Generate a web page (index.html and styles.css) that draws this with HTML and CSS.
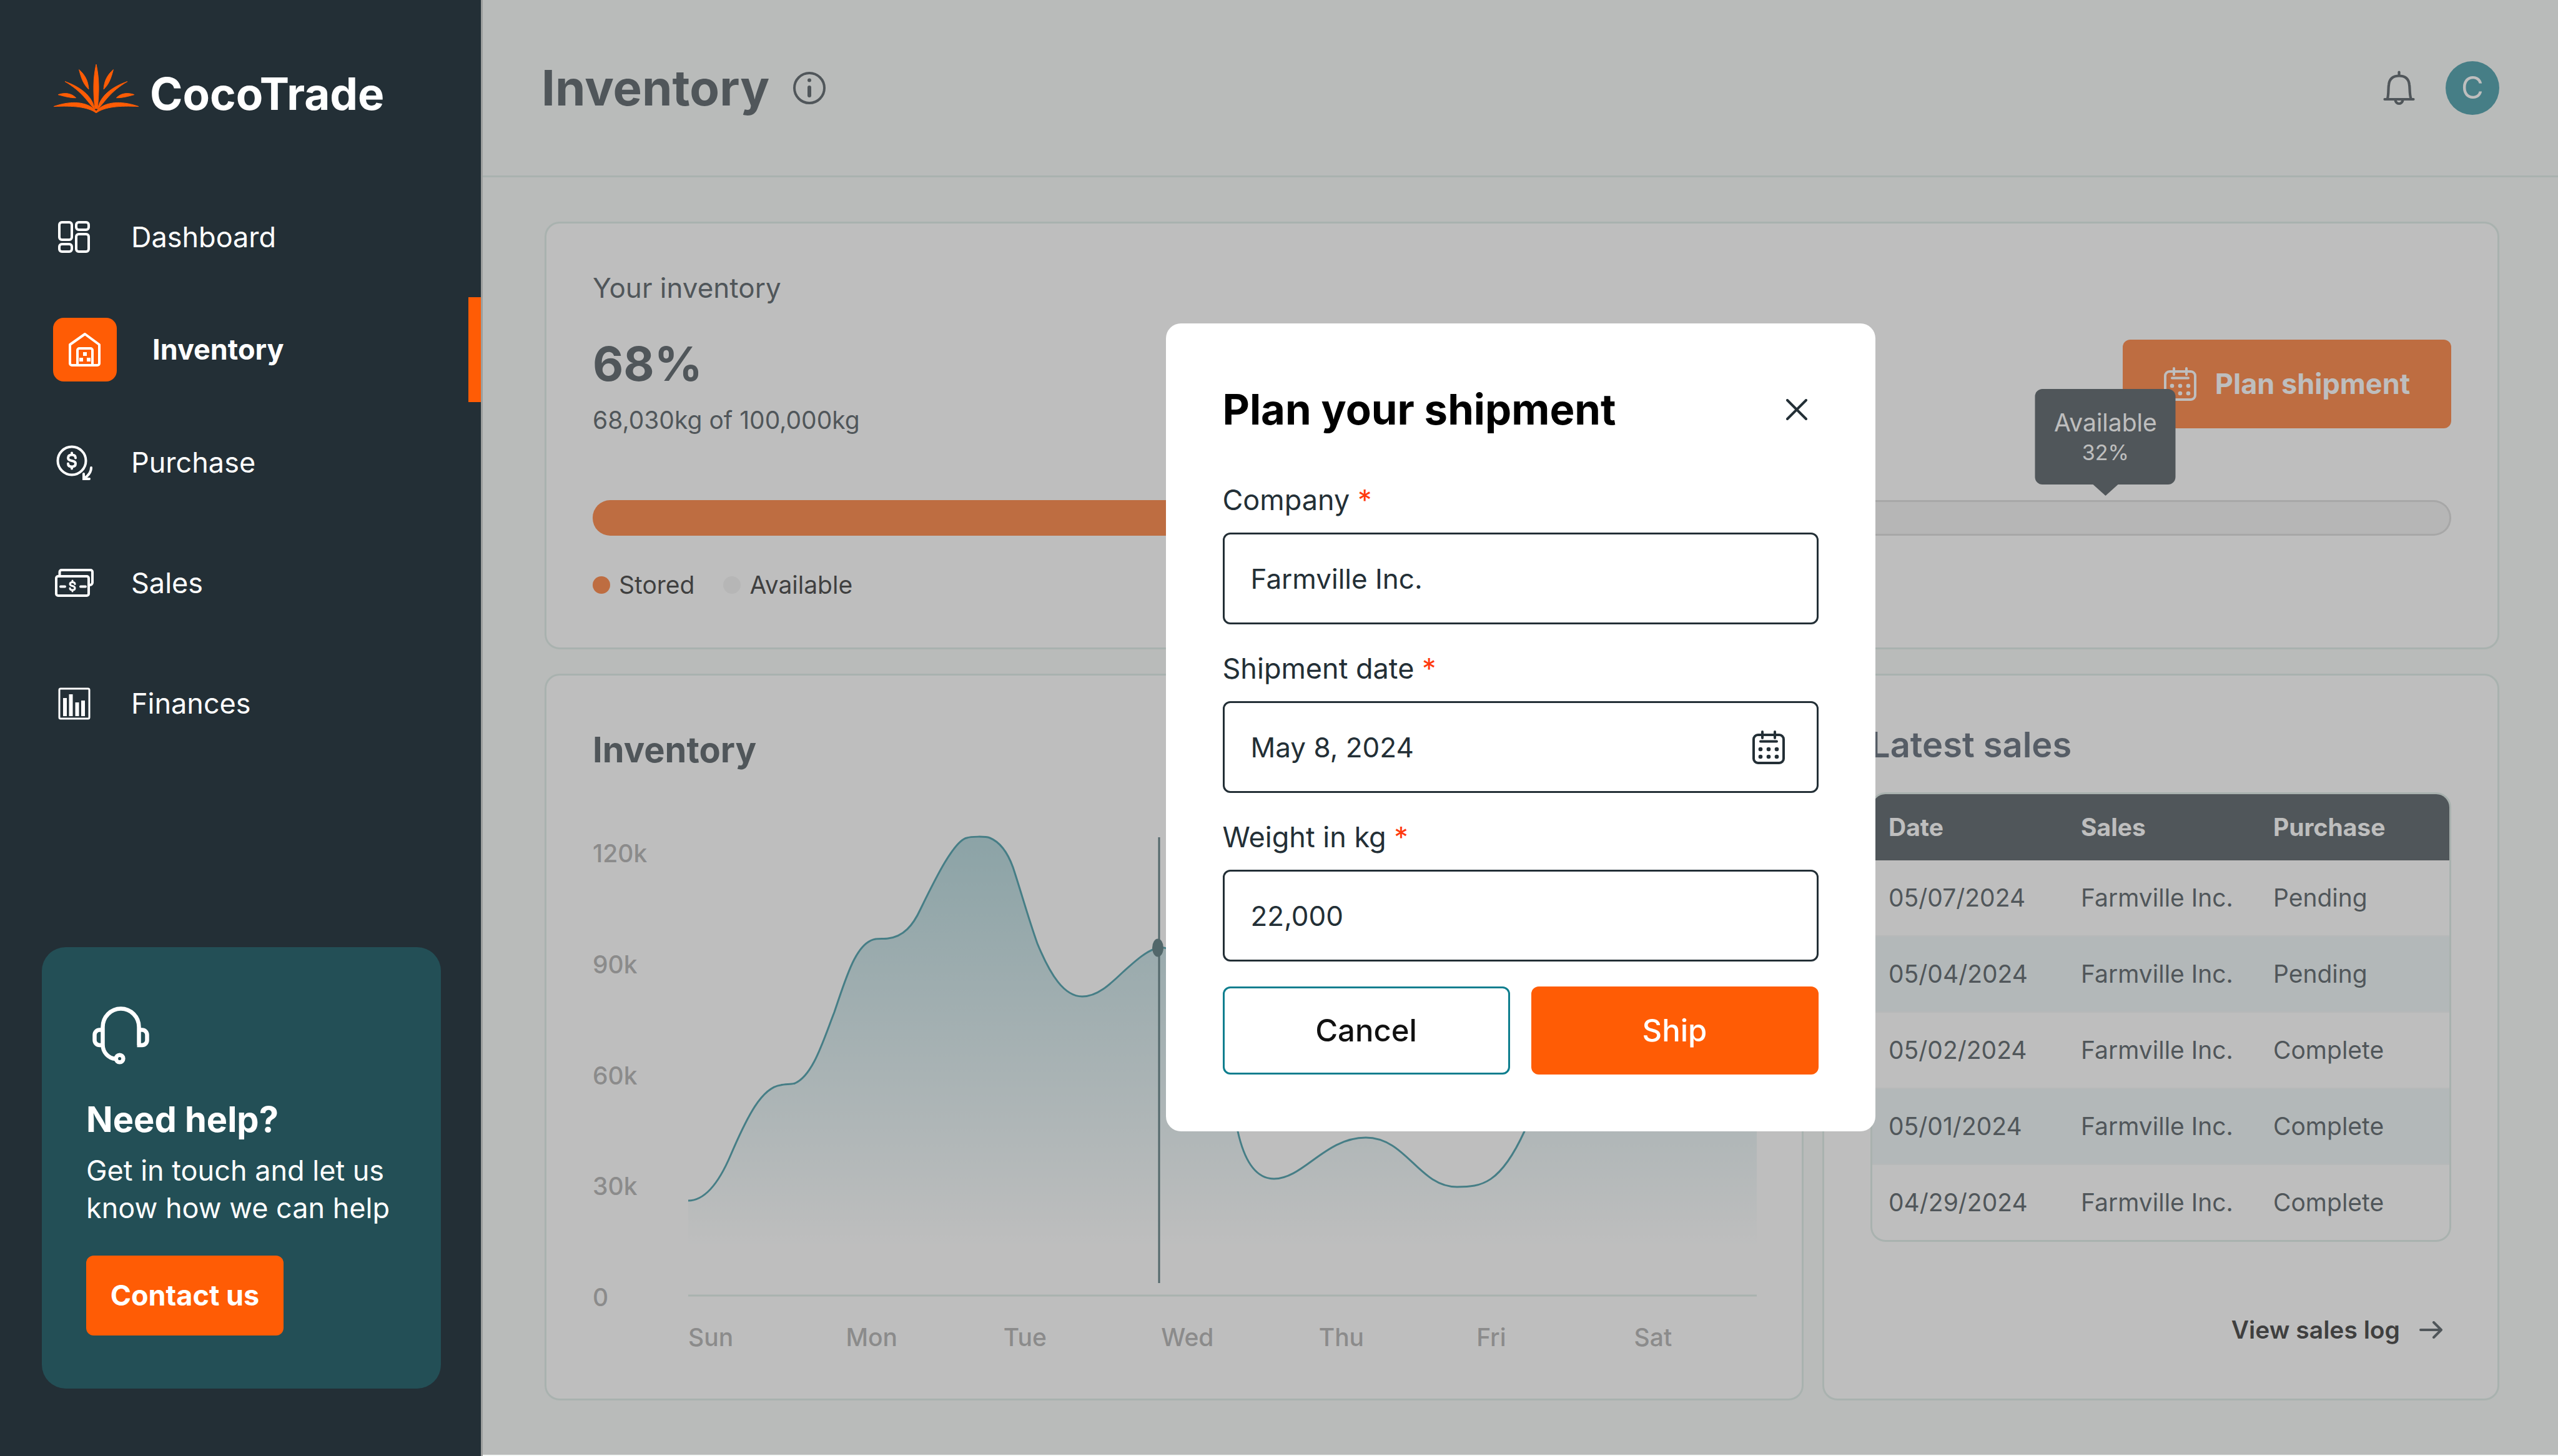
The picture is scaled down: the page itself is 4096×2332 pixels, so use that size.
FILE: index.html
```html
<!DOCTYPE html>
<html lang="en">
<head>
<meta charset="utf-8">
<title>CocoTrade – Inventory</title>
<link rel="stylesheet" href="styles.css">
</head>
<body>
<svg class="sprite" aria-hidden="true">
  <symbol id="calendar" viewBox="0 0 52 54">
    <g fill="none" stroke="currentColor" stroke-width="4" stroke-linecap="round">
      <rect x="2" y="7" width="48" height="45" rx="7"/>
      <path d="M16 2v10M36 2v10M13 17.500h26"/>
    </g>
    <g fill="currentColor">
      <circle cx="13" cy="30" r="3.300"/><circle cx="26" cy="30" r="3.300"/><circle cx="39" cy="30" r="3.300"/>
      <circle cx="13" cy="42" r="3.300"/><circle cx="26" cy="42" r="3.300"/><circle cx="39" cy="42" r="3.300"/>
    </g>
  </symbol>
  <symbol id="leaves" viewBox="0 0 68 78">
    <path d="M40.600 8.500C50 17 55 26 56 40 49 33 45 26 40.600 8.500ZM18 27.500C42 36 62 50 65.500 72 54 60 46 44 18 27.500ZM7 48.600C18 45 28 46 35.600 53.700 26 54 16 51 7 48.600ZM0 67.600C24 59 48 59 62.600 70L68 75V78C55 68 30 66 0 67.600Z"/>
  </symbol>
</svg>
<div class="app">
  <aside class="sidebar">
    <a class="logo" href="#">
      <svg width="136" height="78" viewBox="0 0 136 78" fill="#ff5c05" stroke="#ff5c05" stroke-width="1" aria-hidden="true">
        <use href="#leaves" width="68" height="78"/>
        <use href="#leaves" width="68" height="78" transform="translate(136 0) scale(-1 1)"/>
        <path d="M68 0C73 22 73 44 70 71H66C63 44 63 22 68 0Z"/>
      </svg>
      <span>CocoTrade</span>
    </a>
    <nav class="nav">
      <a class="nav-item" href="#"><span class="nav-icon">
        <svg width="52" height="52" viewBox="0 0 52 52" fill="none" stroke="currentColor" stroke-width="4"><rect x="2" y="2" width="20" height="28" rx="4"/><rect x="29" y="2" width="20" height="12" rx="4"/><rect x="2" y="37" width="20" height="12" rx="4"/><rect x="29" y="21" width="20" height="28" rx="4"/></svg>
      </span>Dashboard</a>
      <a class="nav-item active" href="#" aria-current="page"><span class="nav-icon">
        <svg width="52" height="54" viewBox="0 0 52 54" fill="none" stroke="currentColor" stroke-width="4" stroke-linejoin="round"><path d="M26 2 49 19V49a3 3 0 0 1-3 3H5a3 3 0 0 1-3-3V19Z"/><path d="M14 52V28a3 3 0 0 1 3-3H35a3 3 0 0 1 3 3V52"/><path stroke="none" fill="currentColor" d="M23 31h6v6h-6zM17 40h6v6h-6zM29 40h6v6h-6z"/></svg>
      </span>Inventory</a>
      <a class="nav-item" href="#"><span class="nav-icon">
        <svg width="59" height="56" viewBox="0 0 59 56" fill="none" stroke="currentColor" stroke-width="4" stroke-linecap="round"><circle cx="25" cy="25" r="22.500"/><path d="M31 20.500C31 17 28.500 15.500 25 15.500S19 17 19 20.500 22 24.500 25 25 31 26 31 29.500 28.500 34.500 25 34.500 19 33 19 29.500M25 12.500v3M25 34.500v3"/><path d="M56 36C56 43 51 49 45 53M44 46V54H53"/></svg>
      </span>Purchase</a>
      <a class="nav-item" href="#"><span class="nav-icon">
        <svg width="62" height="45" viewBox="0 0 62 45" fill="none" stroke="currentColor" stroke-width="4" stroke-linecap="round"><rect x="2" y="12" width="52" height="31" rx="3"/><path d="M7.500 11V5a3 3 0 0 1 3-3H57a3 3 0 0 1 3 3V22a4 4 0 0 1-4 4M9 28.500h7M41 28.500h8"/><path stroke-width="3" d="M32 24.500C32 22.500 30.500 21.500 28 21.500S24 22.500 24 24.500 26 27 28 27.500 32 28.500 32 31 30.500 34 28 34 24 33 24 31M28 19v2M28 34v2"/></svg>
      </span>Sales</a>
      <a class="nav-item" href="#"><span class="nav-icon">
        <svg width="52" height="52" viewBox="0 0 52 52" fill="none" stroke="currentColor" stroke-width="3"><rect x="2" y="2" width="48" height="48" rx="2"/><path stroke-width="6" d="M11 46V17M20.500 46V11M30.500 46V24M40 46V21"/></svg>
      </span>Finances</a>
    </nav>
    <section class="help">
      <svg class="headset" width="91" height="93" viewBox="0 0 91 93" fill="none" stroke="currentColor" stroke-width="6.500" aria-hidden="true"><path d="M37 84C26 83 16.500 74 16.500 61V33a29 29.500 0 0 1 58 0V62M16.500 37.500H11.500a8 8 0 0 0-8 8V54a8 8 0 0 0 8 8H16.500M74.500 37.500H79.500a8 8 0 0 1 8 8V54a8 8 0 0 1-8 8H71.500"/><circle cx="43.600" cy="83.500" r="5.800"/></svg>
      <h2>Need help?</h2>
      <p>Get in touch and let us know how we can help</p>
      <button class="btn contact" type="button">Contact us</button>
    </section>
  </aside>

  <main class="main">
    <header class="topbar">
      <h1>Inventory</h1>
      <svg width="52" height="52" viewBox="0 0 52 52" fill="none" stroke="currentColor" stroke-width="4" stroke-linecap="round" aria-hidden="true"><circle cx="26" cy="26" r="24"/><path stroke-width="6" d="M26 25V38"/><circle cx="26" cy="13.500" r="3" fill="currentColor" stroke="none"/></svg>
      <button class="bell" type="button" aria-label="Notifications"><svg width="51" height="56" viewBox="0 0 51 56" fill="none" stroke="currentColor" stroke-width="4.200" stroke-linecap="round"><path d="M25.500 2.500V8M7 45C9 37 8 30 9 23 10 13 16 8.500 25.500 8.500S41 13 42 23C43 30 42 37 44.500 45M2.500 46H48.500M19.500 46.500a6 6.500 0 0 0 12 0"/></svg></button>
      <span class="avatar">C</span>
    </header>

    <div class="content">
      <section class="card stock">
        <div class="stock-head">
          <div>
            <p class="stock-label">Your inventory</p>
            <p class="stock-value">68%</p>
            <p class="stock-detail">68,030kg of 100,000kg</p>
          </div>
          <button class="btn plan" type="button"><svg width="52" height="54" aria-hidden="true"><use href="#calendar"/></svg>Plan shipment</button>
        </div>
        <div class="bar">
          <div class="bar-stored" style="width:68%"></div>
          <div class="bar-free"><div class="tooltip">Available<small>32%</small></div></div>
        </div>
        <ul class="legend">
          <li><i class="dot stored"></i>Stored</li>
          <li><i class="dot"></i>Available</li>
        </ul>
      </section>

      <div class="panels">
        <section class="card chart-card">
          <h2>Inventory</h2>
          <div class="chart">
            <div class="y-axis"><span>120k</span><span>90k</span><span>60k</span><span>30k</span><span>0</span></div>
            <div class="plot">
              <svg viewBox="0 0 1711 740" preserveAspectRatio="none" role="img" aria-label="Inventory by day">
                <defs><linearGradient id="fade" gradientUnits="userSpaceOnUse" x1="0" y1="0" x2="0" y2="665"><stop offset="0" stop-color="#0e7e8e" stop-opacity=".42"/><stop offset="1" stop-color="#0e7e8e" stop-opacity="0"/></linearGradient></defs>
                <path fill="url(#fade)" d="M0 586C28 586 51 553 68 513 95 450 118 405 148 401 155 399 165 400 171 398 200 385 216 330 234 284 252 232 268 172 300 167 306 166 314 167 320 166 345 163 360 145 372 119 395 72 425 10 446 5 452 3 475 2 483 5 500 12 512 30 520 52 532 88 545 135 559 174 580 225 602 259 631 259 655 259 675 240 696 220 715 203 733 186 752 181 810 170 830 330 880 475 890 520 908 551 938 551 985 551 1020 485 1085 485 1150 485 1170 564 1231 564 1270 564 1300 560 1339 475 1400 330 1450 200 1711 180V665H0Z"/>
                <path fill="none" stroke="#0e7e8e" stroke-width="3" d="M0 586C28 586 51 553 68 513 95 450 118 405 148 401 155 399 165 400 171 398 200 385 216 330 234 284 252 232 268 172 300 167 306 166 314 167 320 166 345 163 360 145 372 119 395 72 425 10 446 5 452 3 475 2 483 5 500 12 512 30 520 52 532 88 545 135 559 174 580 225 602 259 631 259 655 259 675 240 696 220 715 203 733 186 752 181 810 170 830 330 880 475 890 520 908 551 938 551 985 551 1020 485 1085 485 1150 485 1170 564 1231 564 1270 564 1300 560 1339 475 1400 330 1450 200 1711 180"/>
                <path stroke="#d4e6e0" stroke-width="3" d="M0 738H1711"/>
                <path stroke="#265056" stroke-width="3" d="M754 4V718"/>
                <ellipse cx="752" cy="181" rx="9" ry="14.500" fill="#265056"/>
              </svg>
            </div>
            <div class="x-axis"><span>Sun</span><span>Mon</span><span>Tue</span><span>Wed</span><span>Thu</span><span>Fri</span><span>Sat</span></div>
          </div>
        </section>

        <section class="card sales-card">
          <h2>Latest sales</h2>
          <table>
            <thead><tr><th>Date</th><th>Sales</th><th>Purchase</th></tr></thead>
            <tbody>
              <tr><td>05/07/2024</td><td>Farmville Inc.</td><td>Pending</td></tr>
              <tr><td>05/04/2024</td><td>Farmville Inc.</td><td>Pending</td></tr>
              <tr><td>05/02/2024</td><td>Farmville Inc.</td><td>Complete</td></tr>
              <tr><td>05/01/2024</td><td>Farmville Inc.</td><td>Complete</td></tr>
              <tr><td>04/29/2024</td><td>Farmville Inc.</td><td>Complete</td></tr>
            </tbody>
          </table>
          <a class="log-link" href="#">View sales log<svg width="37" height="28" viewBox="0 0 37 28" fill="none" stroke="#232f36" stroke-width="4" stroke-linecap="round" stroke-linejoin="round" aria-hidden="true"><path d="M2 14H35M23 2 35 14 23 26"/></svg></a>
        </section>
      </div>
    </div>

    <div class="overlay">
      <div class="modal" role="dialog" aria-modal="true" aria-labelledby="dialog-title">
        <div class="modal-head">
          <h2 id="dialog-title">Plan your shipment</h2>
          <button class="icon-btn" type="button" aria-label="Close"><svg width="34" height="34" viewBox="0 0 34 34" fill="none" stroke="currentColor" stroke-width="4" stroke-linecap="round"><path d="M2 2 32 32M32 2 2 32"/></svg></button>
        </div>
        <form>
          <div class="field">
            <label for="company">Company <b>*</b></label>
            <div class="control"><input id="company" type="text" value="Farmville Inc."></div>
          </div>
          <div class="field">
            <label for="date">Shipment date <b>*</b></label>
            <div class="control"><input id="date" type="text" value="May 8, 2024"><button class="icon-btn" type="button" aria-label="Choose date"><svg width="52" height="54"><use href="#calendar"/></svg></button></div>
          </div>
          <div class="field">
            <label for="weight">Weight in kg <b>*</b></label>
            <div class="control"><input id="weight" type="text" value="22,000"></div>
          </div>
          <div class="actions">
            <button class="btn cancel" type="button">Cancel</button>
            <button class="btn ship" type="submit">Ship</button>
          </div>
        </form>
      </div>
    </div>
  </main>
</div>
</body>
</html>
```
FILE: styles.css
```css
:root {
  --ink: #232f36;
  --orange: #ff5c05;
  --teal: #0e7e8e;
  --line: #d4e6e0;
}

* { box-sizing: border-box; margin: 0; padding: 0; }

body {
  font-family: Inter, "Liberation Sans", sans-serif;
  font-size: 45px;
  line-height: 56px;
  color: var(--ink);
  background: #f4f8f6;
}

button, input { font: inherit; color: inherit; border: 0; background: none; }
button { cursor: pointer; }
a { color: inherit; text-decoration: none; }
ul { list-style: none; }
svg { display: block; flex-shrink: 0; }
.sprite { position: absolute; width: 0; height: 0; }

.app { display: grid; grid-template-columns: 770px minmax(0, 1fr); min-height: 100vh; }

.btn { display: flex; align-items: center; justify-content: center; border-radius: 12px; background: var(--orange); color: #fff; }
.icon-btn { display: flex; }

/* Sidebar */
.sidebar { display: flex; flex-direction: column; background: var(--ink); color: #fff; padding: 95px 0 108px; }
.logo { display: flex; align-items: center; gap: 18px; padding-left: 86px; }
.logo span { padding-top: 16px; font-size: 71px; line-height: 78px; font-weight: 700; }
.nav { margin-top: 94px; }
.nav-item { display: flex; align-items: center; gap: 57px; height: 193px; padding-left: 85px; }
.nav-icon { display: flex; justify-content: center; width: 68px; }
.nav-item.active { height: 168px; font-weight: 700; border-right: 20px solid var(--orange); }
.active .nav-icon { align-items: center; width: 102px; height: 102px; border-radius: 17px; background: var(--orange); }

.help { margin: auto 64px 0 67px; padding: 95px 71px 85px; border-radius: 38px; background: #234f56; }
.headset { margin-left: 10px; }
.help h2 { margin-top: 54px; font-size: 56px; line-height: 68px; }
.help p { margin-top: 18px; line-height: 60px; }
.contact { width: 316px; height: 128px; margin-top: 46px; font-weight: 700; }

/* Main area */
.main { position: relative; display: flex; flex-direction: column; border-left: 3px solid #9c9e9d; }
.topbar { display: flex; align-items: center; height: 284px; padding: 0 94px; border-bottom: 3px solid var(--line); }
.topbar h1 { margin-right: 38px; font-size: 78px; line-height: 92px; }
.bell { margin-left: auto; margin-right: 49px; }
.avatar { width: 86px; height: 86px; border-radius: 50%; background: var(--teal); color: #fff; font-size: 49px; line-height: 86px; text-align: center; }

.content { flex: 1; display: flex; flex-direction: column; gap: 39px; padding: 71px 94px 89px 99px; }
.card { border: 3px solid var(--line); border-radius: 24px; background: #fff; }

/* Stock level */
.stock { padding: 75px 74px 72px; }
.stock-head { display: flex; justify-content: space-between; align-items: flex-end; }
.stock-label { font-size: 44px; }
.stock-value { margin-top: 47px; font-size: 76px; line-height: 92px; font-weight: 700; }
.stock-detail { margin-top: 17px; font-size: 39px; }
.plan { gap: 30px; width: 526px; height: 142px; margin-bottom: 15px; font-weight: 700; }
.bar { display: flex; height: 57px; margin-top: 100px; }
.bar-stored { border-radius: 28px 0 0 28px; background: var(--orange); }
.bar-free { position: relative; flex: 1; border: 3px solid #d0d0d0; border-left: 0; border-radius: 0 28px 28px 0; background: #eee; }
.tooltip { position: absolute; bottom: calc(100% + 28px); left: 42%; transform: translateX(-50%); width: 225px; padding: 30px 0 27px; border-radius: 12px; background: var(--ink); color: #fff; font-size: 39px; line-height: 48px; text-align: center; }
.tooltip small { display: block; font-size: 34px; }
.tooltip::after { content: ""; position: absolute; top: 100%; left: 50%; margin-left: -20px; border: 20px solid transparent; border-bottom: 0; border-top: 18px solid var(--ink); }
.legend { display: flex; gap: 46px; margin-top: 51px; font-size: 39px; color: #000; }
.legend li { display: flex; align-items: center; gap: 14px; }
.dot { width: 28px; height: 28px; border-radius: 50%; background: #eee; }
.dot.stored { background: var(--orange); }

/* Lower panels */
.panels { flex: 1; display: grid; grid-template-columns: minmax(0, 2016fr) minmax(0, 1084fr); gap: 30px; }
.panels h2 { font-size: 56px; line-height: 68px; }

.chart-card { display: flex; flex-direction: column; padding: 85px 16px 74px 74px; }
.chart { flex: 1; display: grid; grid-template-columns: 153px minmax(0, 1fr); grid-template-rows: minmax(400px, 1fr) auto; row-gap: 16px; margin-top: 102px; font-size: 39px; line-height: 48px; font-weight: 500; color: #989898; }
.y-axis { display: flex; flex-direction: column; justify-content: space-between; padding-top: 6px; }
.plot { display: flex; flex-direction: column; margin: 0 56px 25px 0; }
.plot svg { flex: 1 1 0; width: 100%; min-height: 0; }
.x-axis { grid-column: 2; display: grid; grid-template-columns: repeat(7, 1fr); }

.sales-card { display: flex; flex-direction: column; padding: 77px 74px 82px; }
.sales-card h2 { font-weight: 600; color: #2e3c4e; }
table { width: 100%; margin-top: 42px; table-layout: fixed; border: 3px solid var(--line); border-radius: 24px; border-spacing: 0; overflow: hidden; font-size: 39px; }
th, td { padding: 0 0 0 26px; text-align: left; }
th { height: 106px; background: var(--ink); color: #fff; font-weight: 700; }
td { height: 122px; border-bottom: 2px solid #f0f4f4; }
tbody tr:nth-child(even) { background: #e8f2f4; }
tr:last-child td { height: 120px; border-bottom: 0; }
.log-link { display: flex; align-items: center; gap: 31px; align-self: flex-end; margin-top: auto; padding-right: 14px; font-size: 39px; font-weight: 600; color: #000; }

/* Shipment dialog */
.overlay { position: absolute; inset: 0 0 2px; display: grid; place-items: center; background: rgba(126, 126, 126, .5); }
.modal { width: 1136px; padding: 91px; border-radius: 24px; background: #fff; }
.modal-head { display: flex; align-items: center; justify-content: space-between; padding-right: 18px; }
.modal-head h2 { font-size: 67px; line-height: 94px; color: #000; }
form { margin-top: 70px; }
.field + .field { margin-top: 43px; }
.field label { display: block; margin-bottom: 24px; }
.field b { color: #ff3a0d; font-weight: 400; }
.control { display: flex; align-items: center; height: 147px; padding: 0 51px 0 42px; border: 3px solid var(--ink); border-radius: 12px; font-size: 44px; }
.control input { flex: 1; min-width: 0; height: 100%; outline: 0; }
.actions { display: grid; grid-template-columns: 1fr 1fr; gap: 34px; margin-top: 40px; }
.actions .btn { height: 141px; font-size: 49px; font-weight: 500; }
.actions .cancel { border: 3px solid var(--teal); background: #fff; color: #111; }
```
